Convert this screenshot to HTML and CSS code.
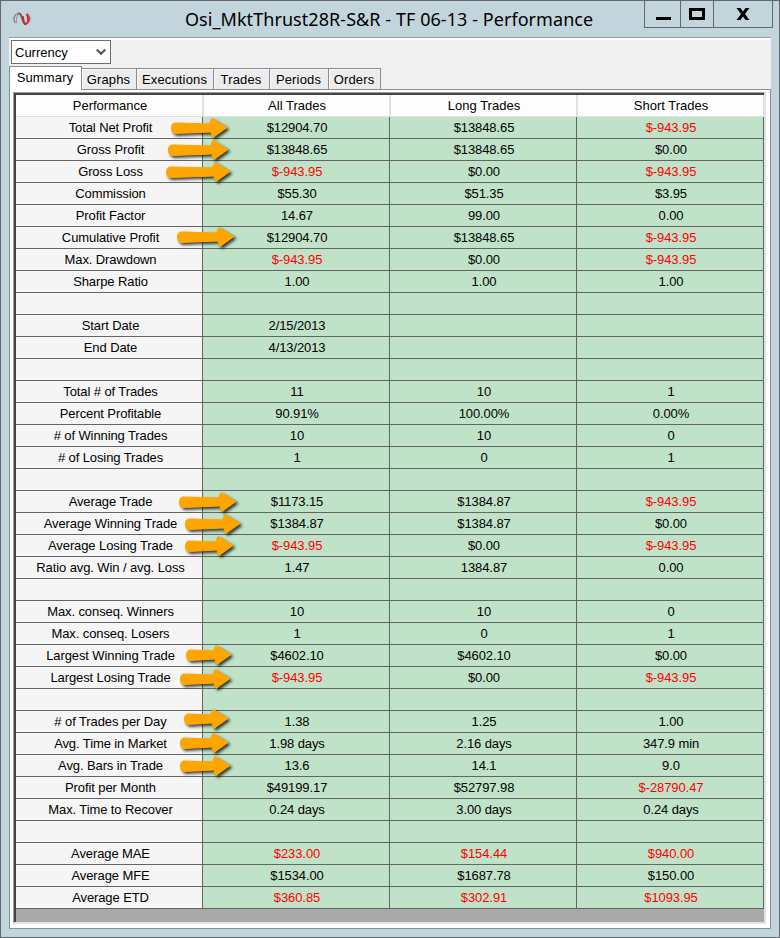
FILE: index.html
```
<!DOCTYPE html>
<html lang="en">
<head>
  <meta charset="UTF-8">
  <title>Osi_MktThrust28R-S&amp;R - TF 06-13 - Performance</title>
  <link rel="stylesheet" href="styles.css">
</head>
<body>

  <div class="window">
    <header class="titlebar">
      <svg class="logo" width="20" height="16" viewBox="0 0 20 16" fill="none" stroke-linecap="round">
        <path d="M3 11.500C.5 8 2.500 3.500 6 2.500" stroke="#94867f" stroke-width="1.600"/>
        <path d="M4.800 12C4 8 4.500 4.500 7.500 3" stroke="#a89a94" stroke-width="1.200"/>
        <path d="M7 2.500C10.500 2.500 10 12.500 13.500 13" stroke="#85554c" stroke-width="2"/>
        <path d="M11 6C11.500 9.500 12 13.500 14 13C16.500 11.500 17 7 14.800 3.500" stroke="#c0282c" stroke-width="1.800"/>
        <path d="M15.500 3C18.500 5.500 18.500 9.500 16 12" stroke="#c5595b" stroke-width="1.500"/>
      </svg>
      <h1>Osi_MktThrust28R-S&amp;R - TF 06-13 - Performance</h1>
      <div class="controls">
        <button class="min"><svg width="16" height="14"><path d="M0 11.500H15" stroke="#000" stroke-width="3"/></svg></button>
        <button class="max"><svg width="16" height="14"><path d="M1.500 2.500H14.500V11.500H1.500Z" fill="none" stroke="#000" stroke-width="3"/></svg></button>
        <button class="close"><svg width="14" height="14"><path d="M.5 1H4.500L7 4.500L9.500 1H13.500L9 7L13.500 13H9.500L7 9.500L4.500 13H.5L5 7Z"/></svg></button>
      </div>
    </header>

    <main class="client">
      <div class="select">
        <span>Currency</span>
        <svg width="10" height="8" viewBox="0 0 10 8"><path d="M.7 1.500L5 5.800L9.300 1.500" fill="none" stroke="#555" stroke-width="2.200"/></svg>
      </div>

      <nav class="tabs">
        <div class="tab active">Summary</div>
        <div class="tab graphs">Graphs</div>
        <div class="tab executions">Executions</div>
        <div class="tab trades">Trades</div>
        <div class="tab periods">Periods</div>
        <div class="tab orders">Orders</div>
      </nav>

      <section class="pane">
        <div class="grid">
          <table>
            <thead>
              <tr><th>Performance</th><th>All Trades</th><th>Long Trades</th><th>Short Trades</th></tr>
            </thead>
            <tbody id="rows"></tbody>
          </table>
        </div>
      </section>
    </main>
  </div>

  <script src="script.js"></script>
</body>
</html>
```
FILE: styles.css
```
* {
  box-sizing: border-box;
}

body {
  margin: 0;
  font-family: "Liberation Sans", Arial, sans-serif;
  font-size: 13px;
  color: #000;
}

.window {
  width: 780px;
  height: 938px;
  display: flex;
  flex-direction: column;
  padding: 0 8px 8px;
  background: #c3d5dc;
  border: 1px solid #64656f;
}

.titlebar {
  display: flex;
  height: 36px;
  flex: none;
}

.logo {
  margin: 10px 0 0 3px;
}

h1 {
  margin: 6px 0 0;
  flex: 1;
  padding-left: 153px;
  font: 18px/25px "Noto Sans", "Open Sans", sans-serif;
  letter-spacing: 0.06px;
  white-space: nowrap;
}

.controls {
  display: flex;
  height: 27px;
  margin-right: -2px;
  border: 1px solid #64656f;
  border-top: 0;
}

.controls button {
  display: flex;
  align-items: center;
  justify-content: center;
  padding: 0;
  background: none;
  border: 0;
  border-right: 1px solid #64656f;
}

.controls .min {
  width: 36px;
  padding-left: 2px;
}

.controls .max {
  width: 33px;
}

.controls .close {
  width: 58px;
  border-right: 0;
}

.client {
  flex: 1;
  display: flex;
  flex-direction: column;
  background: #f0f0f0;
  border-top: 1px solid #969ba0;
  box-shadow: inset 0 2px #fff;
}

.select {
  display: flex;
  align-items: center;
  justify-content: space-between;
  width: 100px;
  height: 24px;
  margin: 2px 0 0 2px;
  padding: 0 4px 0 3px;
  background: #fff;
  border: 1px solid #6e6e6e;
}

.tabs {
  display: flex;
  align-items: flex-end;
  height: 26px;
  margin-bottom: -1px;
}

.tab {
  height: 22px;
  line-height: 21px;
  padding-right: 1px;
  text-align: center;
  background: #ececec;
  border: 1px solid #8b8c98;
  border-left: 0;
  box-shadow: inset 1px 1px #f8f8f8;
  letter-spacing: 0.15px;
}

.tab.active {
  width: 73px;
  height: 24px;
  line-height: 22px;
  background: #fff;
  border-left: 1px solid #8b8c98;
  border-bottom: 0;
  position: relative;
}

.graphs { width: 55px; }
.executions { width: 77px; }
.trades { width: 56px; }
.periods { width: 59px; }
.orders { width: 52px; }

.pane {
  flex: 1;
  padding: 2px 4px 4px 3px;
  background: #fff;
  border: 1px solid #8b8c98;
}

.grid {
  height: 832px;
  background: #a9a9a9;
  border: 1px solid #a0a0a0;
  border-right: 2px solid #e3e3e3;
  border-bottom: 2px solid #e3e3e3;
  box-shadow: inset 2px 2px #444;
  padding: 2px 0 0 2px;
}

table {
  width: 748px;
  table-layout: fixed;
  border-collapse: separate;
  border-spacing: 0;
}

th,
td {
  height: 22px;
  padding: 0 0 0 2px;
  line-height: 21px;
  text-align: center;
  font-weight: normal;
  letter-spacing: -0.1px;
  background: #c0e2c8;
  border: solid #646464;
  border-width: 0 1px 1px 0;
  white-space: nowrap;
}

th {
  background: #fdfdfd;
  border-color: #e0e0e0;
  letter-spacing: 0;
}

th + th {
  box-shadow: inset 1px 0 #e0e0e0;
}

td:first-child {
  position: relative;
  padding-left: 3px;
  background: #f5f5f5;
}

.loss {
  color: #f00;
}

/* arrows run across the first column edge */
.arrow {
  position: absolute;
  overflow: visible;
  z-index: 1;
  fill: #ffa500;
  stroke: #ffa500;
  stroke-linejoin: round;
  filter: drop-shadow(2px 2px 1.5px rgba(0, 0, 0, 0.75));
}
```
FILE: script.js
```
// label, all, long, short, [arrow start, arrow length, arrow offset from row top]
const rows = [
  ["Total Net Profit", "$12904.70", "$13848.65", "$-943.95", [171, 57, 0]],
  ["Gross Profit", "$13848.65", "$13848.65", "$0.00", [168, 61, 0]],
  ["Gross Loss", "$-943.95", "$0.00", "$-943.95", [166, 65, 0]],
  ["Commission", "$55.30", "$51.35", "$3.95"],
  ["Profit Factor", "14.67", "99.00", "0.00"],
  ["Cumulative Profit", "$12904.70", "$13848.65", "$-943.95", [177, 58, -1]],
  ["Max. Drawdown", "$-943.95", "$0.00", "$-943.95"],
  ["Sharpe Ratio", "1.00", "1.00", "1.00"],
  [],
  ["Start Date", "2/15/2013"],
  ["End Date", "4/13/2013"],
  [],
  ["Total # of Trades", "11", "10", "1"],
  ["Percent Profitable", "90.91%", "100.00%", "0.00%"],
  ["# of Winning Trades", "10", "10", "0"],
  ["# of Losing Trades", "1", "0", "1"],
  [],
  ["Average Trade", "$1173.15", "$1384.87", "$-943.95", [179, 58, 0]],
  ["Average Winning Trade", "$1384.87", "$1384.87", "$0.00", [185, 56, 0]],
  ["Average Losing Trade", "$-943.95", "$0.00", "$-943.95", [185, 49, 0]],
  ["Ratio avg. Win / avg. Loss", "1.47", "1384.87", "0.00"],
  [],
  ["Max. conseq. Winners", "10", "10", "0"],
  ["Max. conseq. Losers", "1", "0", "1"],
  ["Largest Winning Trade", "$4602.10", "$4602.10", "$0.00", [186, 46, -1]],
  ["Largest Losing Trade", "$-943.95", "$0.00", "$-943.95", [180, 51, 1]],
  [],
  ["# of Trades per Day", "1.38", "1.25", "1.00", [184, 45, -3]],
  ["Avg. Time in Market", "1.98 days", "2.16 days", "347.9 min", [180, 49, -1]],
  ["Avg. Bars in Trade", "13.6", "14.1", "9.0", [180, 51, 0]],
  ["Profit per Month", "$49199.17", "$52797.98", "$-28790.47"],
  ["Max. Time to Recover", "0.24 days", "3.00 days", "0.24 days"],
  [],
  ["Average MAE", "$233.00", "$154.44", "$940.00"],
  ["Average MFE", "$1534.00", "$1687.78", "$150.00"],
  ["Average ETD", "$360.85", "$302.91", "$1093.95"]
];

function arrow([start, len, dy]) {
  const h = len - 17;
  const d = `M4 6L${h - 1} 7Q${h - 1} 4 ${h + 1} 1.500L${len - 1} 10.500L${h + 2} 20.500Q${h} 18 ${h} 15L4 16.500Q.5 16 .5 11Q.5 6 4 6Z`;
  return `<svg class="arrow" style="left:${start - 16}px;top:${dy}px" width="${len}" height="22"><path d="${d}"/></svg>`;
}

const losses = ["Average MAE", "Average ETD"];

document.getElementById("rows").innerHTML = rows.map(([label = "", a = "", b = "", c = "", mark]) => {
  const cells = [a, b, c].map(v => {
    const red = v.includes("-") || losses.includes(label);
    return `<td${red ? ' class="loss"' : ""}>${v}</td>`;
  });
  return `<tr><td>${label}${mark ? arrow(mark) : ""}</td>${cells.join("")}</tr>`;
}).join("");
```
